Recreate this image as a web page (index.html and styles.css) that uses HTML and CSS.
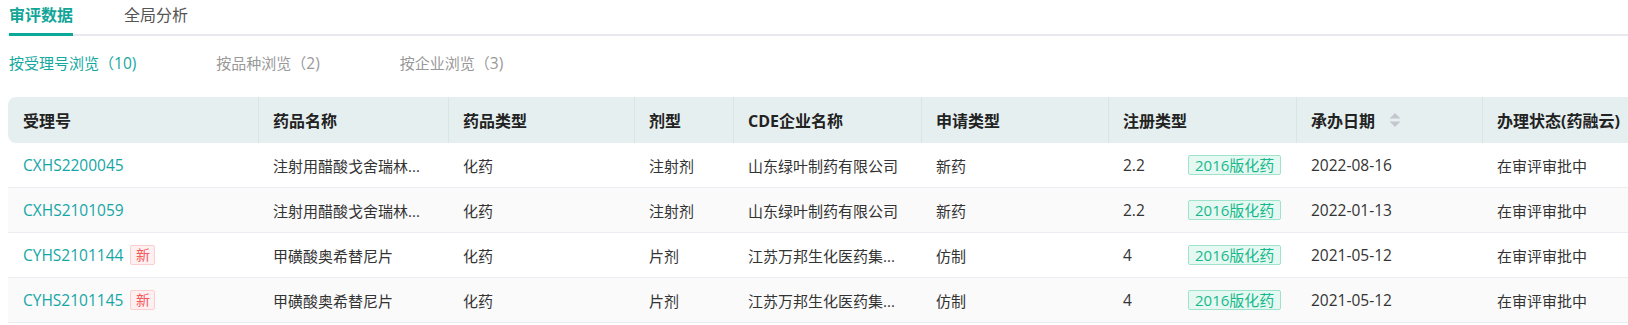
FILE: index.html
```html
<!DOCTYPE html>
<html lang="zh-CN">
<head>
<meta charset="utf-8">
<title>审评数据</title>
<link rel="stylesheet" href="styles.css">
</head>
<body>
<div class="page">
  <div class="tabs">
    <div class="tab active">审评数据</div>
    <div class="tab">全局分析</div>
  </div>
  <div class="subtabs">
    <div class="subtab active">按受理号浏览（<span class="lat">10)</span></div>
    <div class="subtab">按品种浏览（<span class="lat">2)</span></div>
    <div class="subtab">按企业浏览（<span class="lat">3)</span></div>
  </div>
  <div class="table-wrap">
    <table class="grid">
      <colgroup>
        <col class="c1"><col class="c2"><col class="c3"><col class="c4"><col class="c5"><col class="c6"><col class="c7"><col class="c8"><col class="c9">
      </colgroup>
      <thead>
        <tr>
          <th class="first">受理号</th>
          <th>药品名称</th>
          <th>药品类型</th>
          <th>剂型</th>
          <th>CDE企业名称</th>
          <th>申请类型</th>
          <th>注册类型</th>
          <th><span class="sortable">承办日期<svg class="sort" width="12" height="16" viewBox="0 0 12 16"><path d="M6 1 L11.5 6.5 H0.5 Z" fill="#c4c8ce"/><path d="M6 15 L11.5 9.5 H0.5 Z" fill="#c4c8ce"/></svg></span></th>
          <th>办理状态(药融云)</th>
        </tr>
      </thead>
      <tbody>
        <tr>
          <td><span class="link lat">CXHS2200045</span></td>
          <td>注射用醋酸戈舍瑞林...</td>
          <td>化药</td>
          <td>注射剂</td>
          <td>山东绿叶制药有限公司</td>
          <td>新药</td>
          <td><div class="reg"><span class="num lat">2.2</span><span class="tag-green">2016版化药</span></div></td>
          <td><span class="lat">2022-08-16</span></td>
          <td>在审评审批中</td>
        </tr>
        <tr class="alt">
          <td><span class="link lat">CXHS2101059</span></td>
          <td>注射用醋酸戈舍瑞林...</td>
          <td>化药</td>
          <td>注射剂</td>
          <td>山东绿叶制药有限公司</td>
          <td>新药</td>
          <td><div class="reg"><span class="num lat">2.2</span><span class="tag-green">2016版化药</span></div></td>
          <td><span class="lat">2022-01-13</span></td>
          <td>在审评审批中</td>
        </tr>
        <tr>
          <td><span class="link lat">CYHS2101144</span><span class="tag-new">新</span></td>
          <td>甲磺酸奥希替尼片</td>
          <td>化药</td>
          <td>片剂</td>
          <td>江苏万邦生化医药集...</td>
          <td>仿制</td>
          <td><div class="reg"><span class="num lat">4</span><span class="tag-green">2016版化药</span></div></td>
          <td><span class="lat">2021-05-12</span></td>
          <td>在审评审批中</td>
        </tr>
        <tr class="alt">
          <td><span class="link lat">CYHS2101145</span><span class="tag-new">新</span></td>
          <td>甲磺酸奥希替尼片</td>
          <td>化药</td>
          <td>片剂</td>
          <td>江苏万邦生化医药集...</td>
          <td>仿制</td>
          <td><div class="reg"><span class="num lat">4</span><span class="tag-green">2016版化药</span></div></td>
          <td><span class="lat">2021-05-12</span></td>
          <td>在审评审批中</td>
        </tr>
      </tbody>
    </table>
  </div>
</div>
</body>
</html>
```

FILE: styles.css
```css
html, body {
  margin: 0;
  padding: 0;
  background: #ffffff;
}

body {
  font-family: "Open Sans", "Noto Sans CJK SC", sans-serif;
  color: #333333;
  overflow: hidden;
}

.page {
  padding-left: 8px;
}

.tabs {
  display: flex;
  gap: 51px;
  border-bottom: 2px solid #e8e8ee;
  height: 34px;
  padding-left: 1px;
}

.tab {
  font-size: 16px;
  line-height: 22px;
  padding-top: 4px;
  height: 29px;
  color: #555555;
}

.tab.active {
  color: #10a597;
  font-weight: bold;
  border-bottom: 3px solid #0aa896;
}

.subtabs {
  display: flex;
  gap: 80px;
  margin-top: 16px;
  padding-left: 1px;
  height: 22px;
}

.subtab {
  font-size: 15px;
  line-height: 22px;
  color: #999999;
}

.subtab.active {
  color: #14a8a0;
}

.lat {
  font-size: 15.5px;
}

.table-wrap {
  margin-top: 23px;
  overflow: hidden;
}

.grid {
  border-collapse: separate;
  border-spacing: 0;
  table-layout: fixed;
  width: 1870px;
}

.c1 { width: 250px; }
.c2 { width: 190px; }
.c3 { width: 186px; }
.c4 { width: 99px; }
.c5 { width: 188px; }
.c6 { width: 187px; }
.c7 { width: 188px; }
.c8 { width: 186px; }
.c9 { width: 396px; }

.grid th {
  background: #e6eff0;
  height: 46px;
  padding: 0 0 0 14px;
  text-align: left;
  font-size: 16px;
  font-weight: bold;
  color: #222222;
  border-left: 1px solid #d6e6e7;
  white-space: nowrap;
}

.grid th.first {
  border-left: 1px solid transparent;
  border-radius: 8px 0 0 8px;
}

.sortable {
  display: inline-flex;
  align-items: center;
}

.sort {
  margin-left: 14px;
}

.grid td {
  height: 44px;
  padding: 0 0 0 15px;
  font-size: 15px;
  color: #333333;
  border-bottom: 1px solid #ebedf3;
  white-space: nowrap;
}

.grid tr.alt td {
  background: #fafafa;
}

.link {
  color: #14a6a6;
}

.tag-new {
  display: inline-block;
  margin-left: 7px;
  width: 23px;
  height: 18px;
  line-height: 18px;
  text-align: center;
  font-size: 14px;
  color: #f4595b;
  background: #fef0f0;
  border: 1px solid #fbcfcf;
  border-radius: 2px;
  vertical-align: 1px;
}

.reg {
  display: flex;
  align-items: center;
}

.num {
  width: 65px;
}

.tag-green {
  display: inline-block;
  height: 18px;
  line-height: 18px;
  padding: 0 6px;
  font-size: 15px;
  color: #16b88c;
  background: #e5f8f1;
  border: 1px solid #a0e3cc;
  border-radius: 2px;
}
```
